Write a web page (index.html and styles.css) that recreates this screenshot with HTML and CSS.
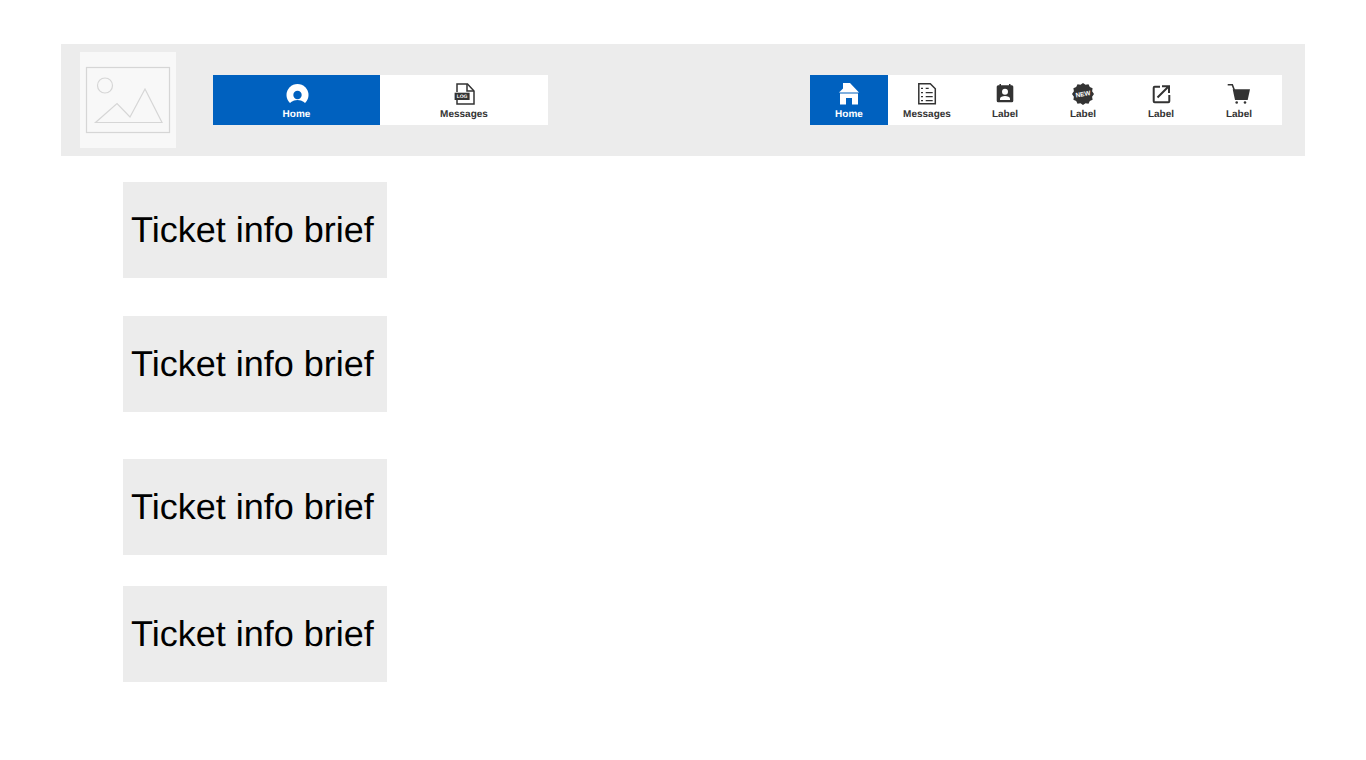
FILE: index.html
```html
<!DOCTYPE html>
<html lang="en">
<head>
<meta charset="UTF-8">
<meta name="viewport" content="width=device-width, initial-scale=1.0">
<title>Tickets</title>
<link rel="stylesheet" href="styles.css">
</head>
<body>

<header class="header">
    <div class="logo">
        <svg width="96" height="96" viewBox="0 0 96 96" fill="none" stroke="#d6d6d6" stroke-width="1.2">
            <rect x="6.5" y="15.5" width="83" height="65"/>
            <circle cx="25" cy="33.5" r="7.5"/>
            <path d="M15.5 70.5 L37 51.5 L50 65 L65 37 L82 70.5 Z"/>
        </svg>
    </div>

    <nav class="nav nav-left">
        <a class="nav-item active">
            <svg class="icon" viewBox="0 0 24 24">
                <circle cx="12.500" cy="13" r="11" fill="#fff"/>
                <circle cx="12.500" cy="13" r="4.200" fill="#0061bf"/>
                <ellipse cx="12.500" cy="25" rx="9" ry="7" fill="#0061bf"/>
            </svg>
            <span>Home</span>
        </a>
        <a class="nav-item">
            <svg class="icon" viewBox="0 0 24 24">
                <path d="M5 10V2h10.500l6.500 7v13H5v-4" fill="none" stroke="#333" stroke-width="1.500"/>
                <path d="M15 2v7h7" fill="none" stroke="#333" stroke-width="1.500"/>
                <rect x="2.600" y="10.700" width="15" height="7.300" fill="#333"/>
                <text x="10.100" y="16.200" class="icon-text" font-size="5">LOG</text>
            </svg>
            <span>Messages</span>
        </a>
    </nav>

    <nav class="nav nav-right">
        <a class="nav-item active">
            <svg class="icon" viewBox="0 0 24 24">
                <path d="M6 1h7l9 9.500H2l4-4z" fill="#fff"/>
                <path d="M3 11.500h18V22.500h-6V16H9v6.500H3z" fill="#fff"/>
            </svg>
            <span>Home</span>
        </a>
        <a class="nav-item">
            <svg class="icon" viewBox="0 0 24 24">
                <path d="M3.800 1.800h11.500l5 5V21.800H3.800z" fill="none" stroke="#333" stroke-width="1.500"/>
                <path d="M6 6.300h2M10.700 6.300h3M6 10.700h2M10.700 10.700h7M6 14.700h2M10.700 14.700h7M6 18.700h2M10.700 18.700h7" stroke="#333" stroke-width="1.300"/>
            </svg>
            <span>Messages</span>
        </a>
        <a class="nav-item">
            <svg class="icon" viewBox="0 0 24 24">
                <path d="M6.500 2h1.500v1.200h8V2h1.500v1.200h1.300a1.500 1.500 0 0 1 1.500 1.500v14.100a1.500 1.500 0 0 1-1.500 1.500H5.200a1.500 1.500 0 0 1-1.500-1.500V4.700a1.500 1.500 0 0 1 1.500-1.500h1.300z" fill="#333"/>
                <circle cx="12" cy="9.700" r="3" fill="#fff"/>
                <path d="M7 18v-1.500c0-1.500 2.500-2.500 5-2.500s5 1 5 2.500V18z" fill="#fff"/>
            </svg>
            <span>Label</span>
        </a>
        <a class="nav-item">
            <svg class="icon" viewBox="0 0 24 24">
                <path d="M12 1l2.500 1.800 3-.6 1.300 2.700 2.800 1.300-.5 3 1.900 2.800-1.900 2.800.5 3-2.800 1.300-1.300 2.700-3-.6L12 23l-2.500-1.800-3 .6-1.300-2.700-2.800-1.300.5-3L1 12l1.900-2.800-.5-3 2.800-1.300 1.300-2.700 3 .6z" fill="#333"/>
                <text x="12" y="14.200" class="icon-text" font-size="6.500" transform="rotate(-10 12 12)">NEW</text>
            </svg>
            <span>Label</span>
        </a>
        <a class="nav-item">
            <svg class="icon" viewBox="0 0 24 24">
                <path d="M11 4.700H5.700a1 1 0 0 0-1 1v13.600a1 1 0 0 0 1 1h13.600a1 1 0 0 0 1-1V13" fill="none" stroke="#333" stroke-width="2"/>
                <path d="M8.500 15.500L19.500 4.500M13 4.200h7V11" fill="none" stroke="#333" stroke-width="2"/>
            </svg>
            <span>Label</span>
        </a>
        <a class="nav-item">
            <svg class="icon" viewBox="0 0 24 24">
                <path d="M0.700 2.700h4.600l2 5.300" fill="none" stroke="#333" stroke-width="1.600"/>
                <path d="M5.700 7.300H23L20.700 18H8z" fill="#333"/>
                <circle cx="9.700" cy="20.500" r="1.300" fill="#333"/>
                <circle cx="18" cy="20.500" r="1.300" fill="#333"/>
            </svg>
            <span>Label</span>
        </a>
    </nav>
</header>

<main class="tickets">
    <div class="ticket ticket-1">Ticket info brief</div>
    <div class="ticket ticket-2">Ticket info brief</div>
    <div class="ticket ticket-3">Ticket info brief</div>
    <div class="ticket ticket-4">Ticket info brief</div>
</main>

</body>
</html>
```

FILE: styles.css
```css
/* Page */
body {
    margin: 0;
    padding: 44px 61px 0;
    background-color: #fff;
    font-family: "Liberation Sans", Arial, sans-serif;
    text-rendering: geometricPrecision;
}

/* Header bar */
.header {
    display: flex;
    align-items: center;
    height: 112px;
    padding: 0 23px 0 19px;
    background-color: #ececec;
}

.logo {
    width: 96px;
    height: 96px;
    background-color: #f8f8f8;
}

.logo svg {
    display: block;
}

.nav {
    display: flex;
    height: 50px;
    background-color: #fff;
}

.nav-left {
    margin-left: 37px;
}

.nav-left .nav-item {
    width: 167px;
}

.nav-left .nav-item + .nav-item {
    width: 168px;
}

.nav-right {
    margin-left: auto;
    padding-right: 4px;
}

.nav-right .nav-item {
    width: 78px;
}

.nav-item {
    display: flex;
    flex-direction: column;
    align-items: center;
    padding-top: 7px;
    box-sizing: border-box;
    color: #333;
    font-size: 10px;
    font-weight: bold;
    line-height: 12px;
}

.nav-item.active {
    background-color: #0061bf;
    color: #fff;
}

.icon {
    display: block;
    width: 24px;
    height: 24px;
    margin-bottom: 3px;
}

.icon-text {
    fill: #fff;
    font-family: "Liberation Sans", Arial, sans-serif;
    font-weight: bold;
    text-anchor: middle;
}

/* Ticket list */
.tickets {
    padding-left: 62px;
}

.ticket {
    display: flex;
    align-items: center;
    width: 264px;
    height: 96px;
    padding-left: 8px;
    box-sizing: border-box;
    background-color: #ececec;
    color: #000;
    font-size: 36px;
}

.ticket-1 {
    margin-top: 26px;
}

.ticket-2 {
    margin-top: 38px;
}

.ticket-3 {
    margin-top: 47px;
}

.ticket-4 {
    margin-top: 31px;
}
```
